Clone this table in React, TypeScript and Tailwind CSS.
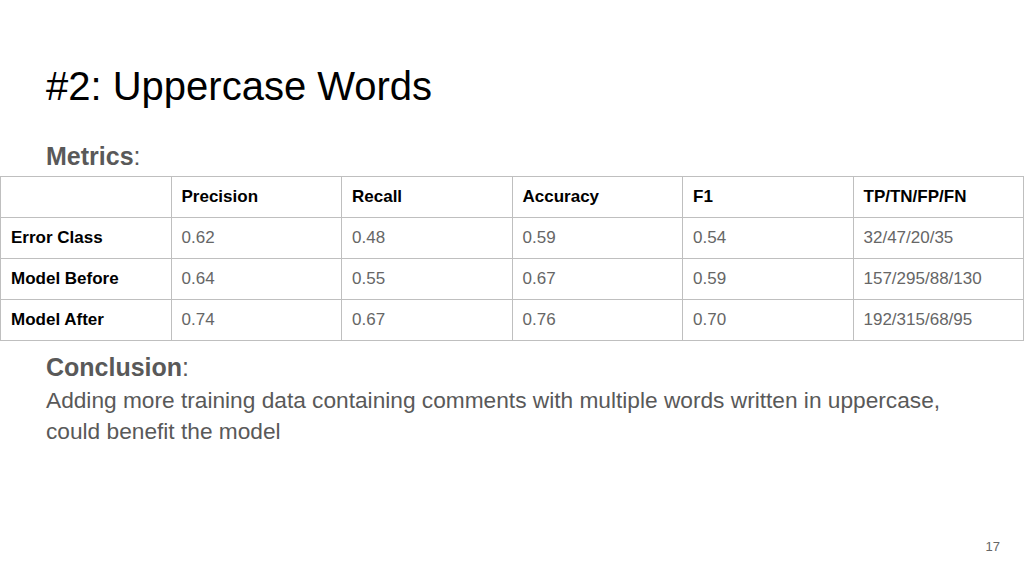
import React from "react";

const headers = ["", "Precision", "Recall", "Accuracy", "F1", "TP/TN/FP/FN"];

const rows = [
  { name: "Error Class", values: ["0.62", "0.48", "0.59", "0.54", "32/47/20/35"] },
  { name: "Model Before", values: ["0.64", "0.55", "0.67", "0.59", "157/295/88/130"] },
  { name: "Model After", values: ["0.74", "0.67", "0.76", "0.70", "192/315/68/95"] },
];

const App = () => {
  return (
    <div className="w-[1024px] h-[576px] bg-white flex flex-col font-['Liberation_Sans',Arial,sans-serif] overflow-hidden">
      {/* Title */}
      <h1 className="pt-[62px] pl-[46px] text-[40px] leading-[48px] text-black">#2: Uppercase Words</h1>

      <div className="mt-[31px] pl-[46px] text-[25px] leading-[30px] text-[#595959]">
        <span className="font-bold">Metrics</span>:
      </div>

      {/* Metrics table */}
      <table className="mt-[5px] w-[1024px] border-collapse table-fixed">
        <thead>
          <tr className="h-[41px]">
            {headers.map((h, i) => (
              <th
                key={i}
                className="border border-[#bfbfbf] px-[10px] text-left text-[17px] font-bold text-black"
              >
                {h}
              </th>
            ))}
          </tr>
        </thead>
        <tbody>
          {rows.map((r) => (
            <tr key={r.name} className="h-[41px]">
              <td className="border border-[#bfbfbf] px-[10px] text-[17px] font-bold text-black">{r.name}</td>
              {r.values.map((v, i) => (
                <td key={i} className="border border-[#bfbfbf] px-[10px] text-[17px] text-[#666666]">
                  {v}
                </td>
              ))}
            </tr>
          ))}
        </tbody>
      </table>

      {/* Conclusion */}
      <div className="mt-[11px] pl-[46px] text-[25px] leading-[30px] text-[#595959]">
        <span className="font-bold">Conclusion</span>:
      </div>
      <p className="mt-[3px] pl-[46px] pr-[60px] text-[22.7px] leading-[31px] text-[#595959]">
        Adding more training data containing comments with multiple words written in uppercase, could benefit the model
      </p>

      <div className="flex-1" />
      <div className="flex justify-end pr-[24px] pb-[20px] text-[13px] text-[#666666]">17</div>
    </div>
  );
};

export default App;
